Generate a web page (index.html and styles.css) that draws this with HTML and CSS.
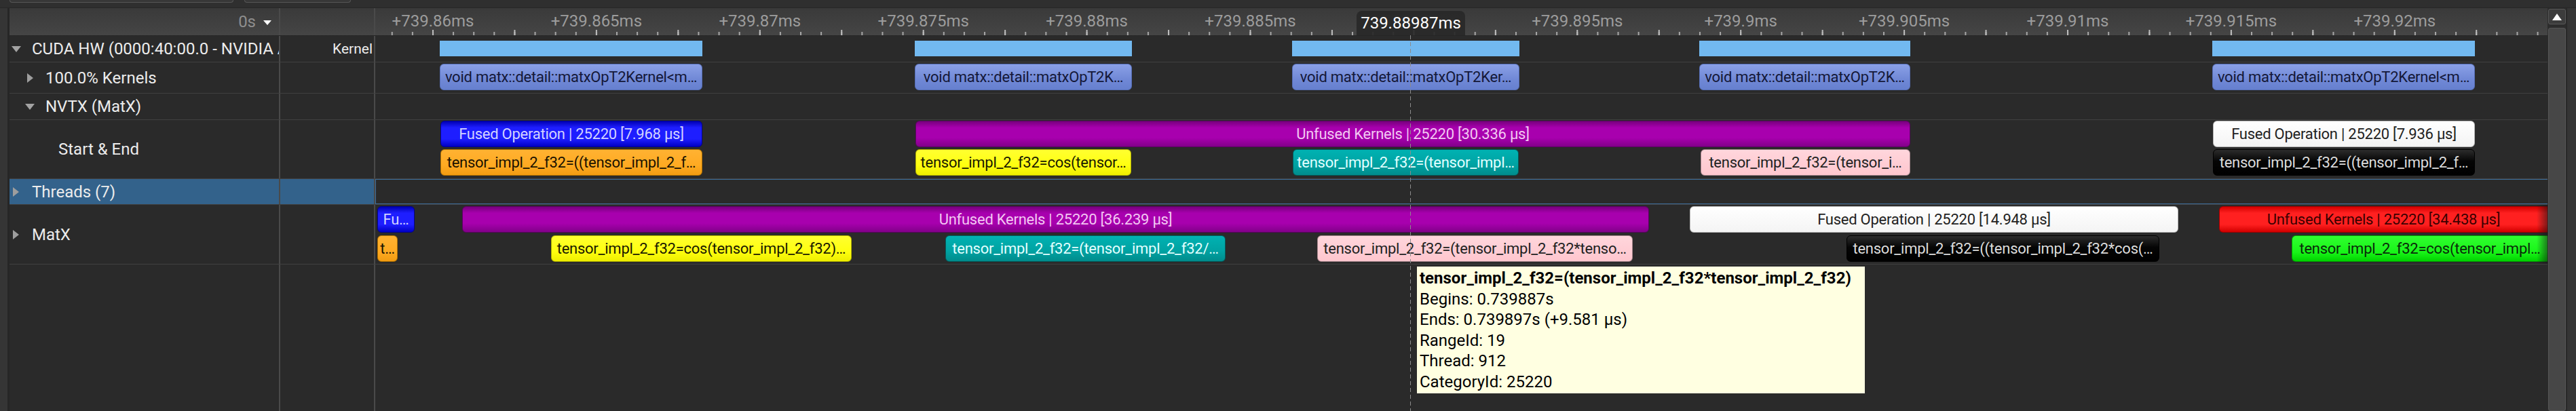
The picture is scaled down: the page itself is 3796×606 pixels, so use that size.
FILE: index.html
```html
<!DOCTYPE html>
<html>
<head>
<meta charset="utf-8">
<link rel="stylesheet" href="styles.css">
</head>
<body>
<div class="app">
  <div class="topbar"><div class="tb tb1"></div><div class="tb tb2"></div></div>
  <div class="main">
    <div class="side"></div>
    <div class="view">
      <div class="row header">
        <div class="cell-name hdr-name"><span class="zero">0s</span><svg class="hdr-tri" width="12" height="7" viewBox="0 0 12 7"><path d="M0 0H12L6 7Z"/></svg></div>
        <div class="sep"></div>
        <div class="cell-kind"></div>
        <div class="sep"></div>
        <div class="track hdr-track">
          <span class="tick-label" style="left:85px">+739.86ms</span>
          <span class="tick-label" style="left:325.9px">+739.865ms</span>
          <span class="tick-label" style="left:566.8px">+739.87ms</span>
          <span class="tick-label" style="left:807.7px">+739.875ms</span>
          <span class="tick-label" style="left:1048.6px">+739.88ms</span>
          <span class="tick-label" style="left:1289.5px">+739.885ms</span>
          <span class="tick-label under" style="left:1530.4px">+739.89ms</span>
          <span class="tick-label" style="left:1771.3px">+739.895ms</span>
          <span class="tick-label" style="left:2012.2px">+739.9ms</span>
          <span class="tick-label" style="left:2253.1px">+739.905ms</span>
          <span class="tick-label" style="left:2494px">+739.91ms</span>
          <span class="tick-label" style="left:2734.9px">+739.915ms</span>
          <span class="tick-label" style="left:2975.8px">+739.92ms</span>
          <svg class="ticks" width="3201" height="9" viewBox="0 0 3201 9">
            <defs>
              <pattern id="minor" x="23.775" y="0" width="30.1125" height="9" patternUnits="userSpaceOnUse"><rect x="0" y="4" width="2" height="5" fill="#a8a8a8"/></pattern>
              <pattern id="major" x="84" y="0" width="120.45" height="9" patternUnits="userSpaceOnUse"><rect x="0" y="1" width="2" height="8" fill="#bdbdbd"/></pattern>
            </defs>
            <rect x="0" y="0" width="3201" height="9" fill="url(#minor)"/>
            <rect x="0" y="0" width="3201" height="9" fill="url(#major)"/>
          </svg>
          <div class="cursor-label" style="left:1446px">739.88987ms</div>
        </div>
      </div>

      <div class="row r-cuda">
        <div class="cell-name lvl0"><span class="tw"><svg class="tri-d" width="14" height="9" viewBox="0 0 14 9"><path d="M0 0H14L7 9Z"/></svg></span><span class="nm">CUDA HW (0000:40:00.0 - NVIDIA A</span></div>
        <div class="sep"></div>
        <div class="cell-kind">Kernel</div>
        <div class="sep"></div>
        <div class="track">
          <div class="kbar" style="left:95px;width:387px"></div>
          <div class="kbar" style="left:795px;width:320px"></div>
          <div class="kbar" style="left:1351px;width:335px"></div>
          <div class="kbar" style="left:1951px;width:311px"></div>
          <div class="kbar" style="left:2707px;width:387px"></div>
        </div>
      </div>

      <div class="row r-kern">
        <div class="cell-name lvl1"><span class="tw"><svg class="tri-r" width="9" height="14" viewBox="0 0 9 14"><path d="M0 0L9 7L0 14Z"/></svg></span><span class="nm">100.0% Kernels</span></div>
        <div class="sep"></div>
        <div class="cell-kind"></div>
        <div class="sep"></div>
        <div class="track lanes t-kern">
          <div class="lane">
            <div class="bar c-kern" style="left:95px;width:387px">void matx::detail::matxOpT2Kernel&lt;m…</div>
            <div class="bar c-kern" style="left:795px;width:320px">void matx::detail::matxOpT2K…</div>
            <div class="bar c-kern" style="left:1351px;width:335px">void matx::detail::matxOpT2Ker…</div>
            <div class="bar c-kern" style="left:1951px;width:311px">void matx::detail::matxOpT2K…</div>
            <div class="bar c-kern" style="left:2707px;width:387px">void matx::detail::matxOpT2Kernel&lt;m…</div>
          </div>
        </div>
      </div>

      <div class="row r-nvtx">
        <div class="cell-name lvl1"><span class="tw"><svg class="tri-d" width="14" height="9" viewBox="0 0 14 9"><path d="M0 0H14L7 9Z"/></svg></span><span class="nm">NVTX (MatX)</span></div>
        <div class="sep"></div>
        <div class="cell-kind"></div>
        <div class="sep"></div>
        <div class="track"></div>
      </div>

      <div class="row r-se">
        <div class="cell-name lvl2"><span class="tw"></span><span class="nm">Start &amp; End</span></div>
        <div class="sep"></div>
        <div class="cell-kind"></div>
        <div class="sep"></div>
        <div class="track lanes t-se">
          <div class="lane">
            <div class="bar c-blue" style="left:96px;width:386px">Fused Operation | 25220 [7.968 µs]</div>
            <div class="bar c-purple" style="left:796px;width:1466px">Unfused Kernels | 25220 [30.336 µs]</div>
            <div class="bar c-white" style="left:2708px;width:386px">Fused Operation | 25220 [7.936 µs]</div>
          </div>
          <div class="lane">
            <div class="bar c-orange" style="left:96px;width:386px">tensor_impl_2_f32=((tensor_impl_2_f…</div>
            <div class="bar c-yellow" style="left:796px;width:318px">tensor_impl_2_f32=cos(tensor…</div>
            <div class="bar c-teal" style="left:1352px;width:333px">tensor_impl_2_f32=(tensor_impl…</div>
            <div class="bar c-pink" style="left:1953px;width:309px">tensor_impl_2_f32=(tensor_i…</div>
            <div class="bar c-black" style="left:2708px;width:386px">tensor_impl_2_f32=((tensor_impl_2_f…</div>
          </div>
        </div>
      </div>

      <div class="row r-thr sel">
        <div class="cell-name lvl0"><span class="tw"><svg class="tri-r" width="9" height="14" viewBox="0 0 9 14"><path d="M0 0L9 7L0 14Z"/></svg></span><span class="nm">Threads (7)</span></div>
        <div class="sep"></div>
        <div class="cell-kind"></div>
        <div class="sep"></div>
        <div class="track sel-track"></div>
      </div>

      <div class="row r-matx">
        <div class="cell-name lvl0"><span class="tw"><svg class="tri-r" width="9" height="14" viewBox="0 0 9 14"><path d="M0 0L9 7L0 14Z"/></svg></span><span class="nm">MatX</span></div>
        <div class="sep"></div>
        <div class="cell-kind"></div>
        <div class="sep"></div>
        <div class="track lanes t-matx">
          <div class="lane">
            <div class="bar c-blue tight" style="left:3px;width:55px">Fu…</div>
            <div class="bar c-purple" style="left:128px;width:1749px">Unfused Kernels | 25220 [36.239 µs]</div>
            <div class="bar c-white" style="left:1937px;width:720px">Fused Operation | 25220 [14.948 µs]</div>
            <div class="bar c-red clipped" style="left:2717px;width:484px">Unfused Kernels | 25220 [34.438 µs]</div>
          </div>
          <div class="lane">
            <div class="bar c-orange tight" style="left:3px;width:30px">t…</div>
            <div class="bar c-yellow" style="left:259px;width:443px">tensor_impl_2_f32=cos(tensor_impl_2_f32)…</div>
            <div class="bar c-teal" style="left:840px;width:413px">tensor_impl_2_f32=(tensor_impl_2_f32/…</div>
            <div class="bar c-pink" style="left:1388px;width:465px">tensor_impl_2_f32=(tensor_impl_2_f32*tenso…</div>
            <div class="bar c-black" style="left:2168px;width:461px">tensor_impl_2_f32=((tensor_impl_2_f32*cos(…</div>
            <div class="bar c-green clipped" style="left:2824px;width:377px">tensor_impl_2_f32=cos(tensor_impl…</div>
          </div>
          <div class="edge-fade"></div>
        </div>
      </div>

      <div class="row filler">
        <div class="cell-name"></div>
        <div class="sep"></div>
        <div class="cell-kind"></div>
        <div class="sep"></div>
        <div class="track"></div>
      </div>

      <div class="cursor-line"></div>
      <div class="tooltip">
        <div class="title">tensor_impl_2_f32=(tensor_impl_2_f32*tensor_impl_2_f32)</div>
        <div>Begins: 0.739887s</div>
        <div>Ends: 0.739897s (+9.581 µs)</div>
        <div>RangeId: 19</div>
        <div>Thread: 912</div>
        <div>CategoryId: 25220</div>
      </div>
    </div>
    <div class="vscroll">
      <div class="up"><svg width="14" height="10" viewBox="0 0 14 10"><path d="M0 10L7 0L14 10Z"/></svg></div>
      <div class="thumb"></div>
    </div>
    <div class="side right"></div>
  </div>
</div>
</body>
</html>
```

FILE: styles.css
```css
* { box-sizing: border-box; }
html, body { margin: 0; padding: 0; }
body {
  width: 3796px;
  height: 606px;
  overflow: hidden;
  background: #2f2f2f;
  font-family: Roboto, "Liberation Sans", sans-serif;
  color: #e8e8e8;
}
.app { display: flex; flex-direction: column; height: 606px; }

.topbar {
  height: 12px;
  flex: none;
  display: flex;
  gap: 16px;
  padding-left: 14px;
  background: #2f2f2f;
  border-bottom: 1px solid #262626;
  overflow: hidden;
}
.tb {
  height: 4px;
  border: 1px solid #565656;
  border-top: none;
  border-radius: 0 0 6px 6px;
  background: #373737;
}
.tb1 { width: 330px; }
.tb2 { width: 157px; }

.main { flex: 1; display: flex; min-height: 0; }
.side { width: 14px; flex: none; background: #353535; border-right: 3px solid #262626; }
.side.right { border-right: none; border-left: 1px solid #262626; }

.view {
  position: relative;
  width: 3740px;
  flex: none;
  display: flex;
  flex-direction: column;
  background: #2a2a2a;
  overflow: hidden;
}

.row { display: flex; flex: none; border-bottom: 1px solid #404040; }
.cell-name {
  width: 397px;
  flex: none;
  display: flex;
  align-items: center;
  font-size: 24px;
  white-space: nowrap;
  overflow: hidden;
  color: #ececec;
}
.sep { width: 2px; flex: none; background: #4a4a4a; }
.cell-kind {
  width: 138px;
  flex: none;
  display: flex;
  align-items: center;
  justify-content: flex-end;
  padding-right: 2px;
  font-size: 21px;
  color: #ececec;
}
.track { flex: 1; position: relative; overflow: hidden; }

.lvl0 { padding-left: 3px; }
.lvl1 { padding-left: 23px; }
.lvl2 { padding-left: 42px; }
.tw { width: 30px; flex: none; display: flex; align-items: center; }
.tri-d { fill: #a3a3a3; }
.tri-r { fill: #9e9e9e; margin-left: 3px; }
.lvl0 .tri-r { margin-left: 2px; }

/* header */
.row.header {
  height: 41px;
  background: linear-gradient(#3a3a3a, #454545);
  border-bottom: 1px solid #262626;
}
.hdr-name { justify-content: flex-end; padding-right: 11px; }
.zero { color: #8e8e8e; font-size: 24px; }
.hdr-tri { fill: #ffffff; margin-left: 11px; margin-top: 3px; }
.hdr-track { overflow: hidden; }
.tick-label {
  position: absolute;
  top: 4px;
  transform: translateX(-50%);
  font-size: 24px;
  line-height: 30px;
  color: #9c9c9c;
  white-space: nowrap;
}
.tick-label.under { color: #555555; }
.ticks { position: absolute; left: 0; bottom: 0; display: block; }
.cursor-label {
  position: absolute;
  top: 4px;
  width: 160px;
  height: 36px;
  border-radius: 8px 8px 0 0;
  background: rgba(40, 40, 40, 0.92);
  color: #ffffff;
  font-size: 24px;
  line-height: 36px;
  text-align: center;
}

/* rows */
.r-cuda { height: 39px; }
.r-kern { height: 46px; }
.r-nvtx { height: 39px; }
.r-se { height: 87px; }
.r-thr { height: 38px; }
.r-matx { height: 88px; }
.filler { flex: 1; border-bottom: none; }

.sel .cell-name, .sel .cell-kind { background: #33628b; }
.sel .sep:first-of-type { background: #4d6f8e; }
.sel-track { border: 1px solid #3d6d9a; border-right: none; }

.kbar { position: absolute; top: 7px; height: 23px; background: #72b9f0; }

.lanes { display: flex; flex-direction: column; }
.t-kern { padding-top: 2px; }
.t-se { padding-top: 1px; gap: 3px; }
.t-matx { padding-top: 2px; gap: 4px; }
.lane { position: relative; height: 39px; flex: none; }

.bar {
  position: absolute;
  top: 0;
  height: 39px;
  border-radius: 6px;
  border: 1px solid;
  font-size: 22px;
  letter-spacing: -0.25px;
  line-height: 37px;
  text-align: center;
  white-space: nowrap;
  overflow: hidden;
  text-overflow: ellipsis;
  padding: 0 2px;
}
.bar.tight { padding: 0 1px; text-overflow: clip; }
.bar.clipped { border-radius: 6px 0 0 6px; border-right: none; }

.c-kern { background: linear-gradient(#8aa0e6, #7088d6 60%, #6680cf); border-color: #566eb6; color: #141838; }
.c-blue { background: linear-gradient(#0000b4, #1e1eff 25%, #1e1eff 70%, #0000c4); border-color: #000090; color: #d2d2ff; }
.c-purple { background: linear-gradient(#78007e, #a800ae 25%, #a800ae 65%, #82008a); border-color: #5c0062; color: #f2c8f2; }
.c-orange { background: linear-gradient(#ffb232, #ffaa22 60%, #f29c12); border-color: #b07000; color: #1a1200; }
.c-yellow { background: linear-gradient(#ffff30, #ffff10 60%, #eeee00); border-color: #b0b000; color: #1a1a00; }
.c-teal { background: linear-gradient(#00b2b2, #00a2a2 60%, #008c8c); border-color: #005c5c; color: #e2ffff; }
.c-pink { background: linear-gradient(#ffd6dc, #ffc6ce); border-color: #a3848a; color: #222222; }
.c-white { background: linear-gradient(#ffffff, #f4f4f4); border-color: #b4b4b4; color: #222222; }
.c-black { background: linear-gradient(#2c2c2c, #050505 45%, #000000); border-color: #000000; color: #dcdcdc; }
.c-red { background: linear-gradient(#d40000, #ff2020 25%, #ff2020 70%, #d20000); border-color: #a00000; color: #3a0000; }
.c-green { background: linear-gradient(#30ff30, #18f418 65%, #00d200); border-color: #00a000; color: #0a2a0a; }

.edge-fade {
  position: absolute;
  top: 0;
  right: 0;
  bottom: 0;
  width: 16px;
  background: linear-gradient(to right, rgba(20, 20, 20, 0), rgba(20, 20, 20, 0.55));
}

.cursor-line {
  position: absolute;
  left: 2064px;
  top: 40px;
  bottom: 0;
  width: 1px;
  background: repeating-linear-gradient(to bottom, #8c8c8c 0 6px, transparent 6px 10px);
}

.tooltip {
  position: absolute;
  left: 2073px;
  top: 380px;
  width: 662px;
  background: #ffffe1;
  border: 1px solid #2a2a2a;
  color: #000000;
  font-size: 24px;
  line-height: 30.5px;
  padding: 2px 4px;
  white-space: nowrap;
}
.tooltip .title { font-weight: bold; }

.vscroll {
  width: 28px;
  flex: none;
  background: #2c2c2c;
  display: flex;
  flex-direction: column;
  padding: 1px 1px 0 1px;
}
.up {
  height: 23px;
  flex: none;
  border: 1px solid #585858;
  border-radius: 3px;
  background: #3c3c3c;
  display: flex;
  align-items: center;
  justify-content: center;
  fill: #ffffff;
}
.thumb {
  flex: 1;
  margin-top: 5px;
  background: #474747;
  border: 1px solid #555555;
  border-radius: 3px;
}
```
